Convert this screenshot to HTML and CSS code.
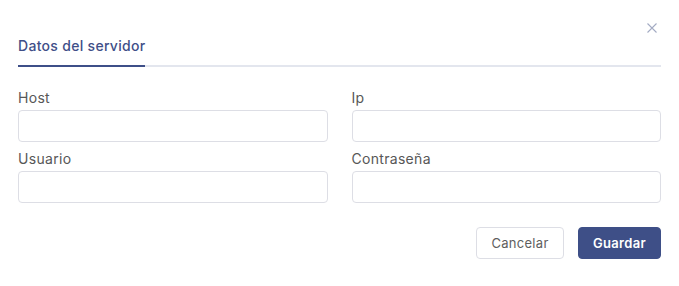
FILE: index.html
```html
<!DOCTYPE html>
<html lang="es">
<head>
<meta charset="utf-8">
<title>Datos del servidor</title>
<link rel="stylesheet" href="styles.css">
</head>
<body>
<div class="modal">
  <div class="modal-header">
    <button class="close" type="button" aria-label="Cerrar">
      <svg width="10" height="10" viewBox="0 0 10 10"><path d="M0.5 0.5 L9.5 9.5 M9.5 0.5 L0.5 9.5" stroke="#a3abc3" stroke-width="1.1" fill="none"/></svg>
    </button>
  </div>
  <div class="tabs">
    <div class="tab active">Datos del servidor</div>
  </div>
  <form class="form">
    <div class="grid">
      <div class="field">
        <label class="label">Host</label>
        <input class="input" type="text">
      </div>
      <div class="field">
        <label class="label">Ip</label>
        <input class="input" type="text">
      </div>
      <div class="field">
        <label class="label">Usuario</label>
        <input class="input" type="text">
      </div>
      <div class="field">
        <label class="label">Contraseña</label>
        <input class="input" type="password">
      </div>
    </div>
    <div class="actions">
      <button class="btn btn-cancel" type="button">Cancelar</button>
      <button class="btn btn-primary" type="button">Guardar</button>
    </div>
  </form>
</div>
</body>
</html>
```

FILE: styles.css
```css
* { box-sizing: border-box; }
html, body { margin: 0; background: #ffffff; }
body {
  font-family: Inter, "Open Sans", "Liberation Sans", sans-serif;
  color: #5a5a5a;
}
.modal {
  width: 679px;
  padding: 18px 18px 0 18px;
}
.modal-header {
  display: flex;
  justify-content: flex-end;
  height: 18px;
}
.close {
  border: 0;
  background: none;
  padding: 0;
  margin: 5px 4px 0 0;
  width: 10px;
  height: 10px;
  display: flex;
}
.tabs {
  display: flex;
  border-bottom: 2px solid #e3e6ee;
}
.tab {
  font-size: 14px;
  line-height: 20px;
  font-weight: 500;
  letter-spacing: 0.3px;
  color: #3f4f88;
  padding-bottom: 9px;
  margin-bottom: -2px;
  border-bottom: 2px solid #3e4f88;
}
.form { padding-top: 21px; }
.grid {
  display: grid;
  grid-template-columns: 1fr 1fr;
  column-gap: 24px;
  row-gap: 7px;
}
.field { display: flex; flex-direction: column; }
.label {
  font-size: 14px;
  line-height: 20px;
  letter-spacing: 0.3px;
  color: #575757;
  margin-bottom: 2px;
}
.input {
  height: 32px;
  border: 1px solid #dddee5;
  border-radius: 4px;
  background: #fff;
  font: inherit;
  padding: 0 10px;
}
.actions {
  display: flex;
  justify-content: flex-end;
  gap: 14px;
  margin-top: 24px;
}
.btn {
  height: 32px;
  border-radius: 4px;
  font-family: inherit;
  font-size: 13px;
  letter-spacing: 0.3px;
  padding: 0;
  cursor: pointer;
}
.btn-cancel {
  background: #fff;
  border: 1px solid #dddee5;
  color: #5e5e5e;
  width: 88px;
}
.btn-primary {
  background: #3e4f87;
  border: 1px solid #3e4f87;
  color: #fff;
  font-weight: 600;
  width: 83px;
}
```
